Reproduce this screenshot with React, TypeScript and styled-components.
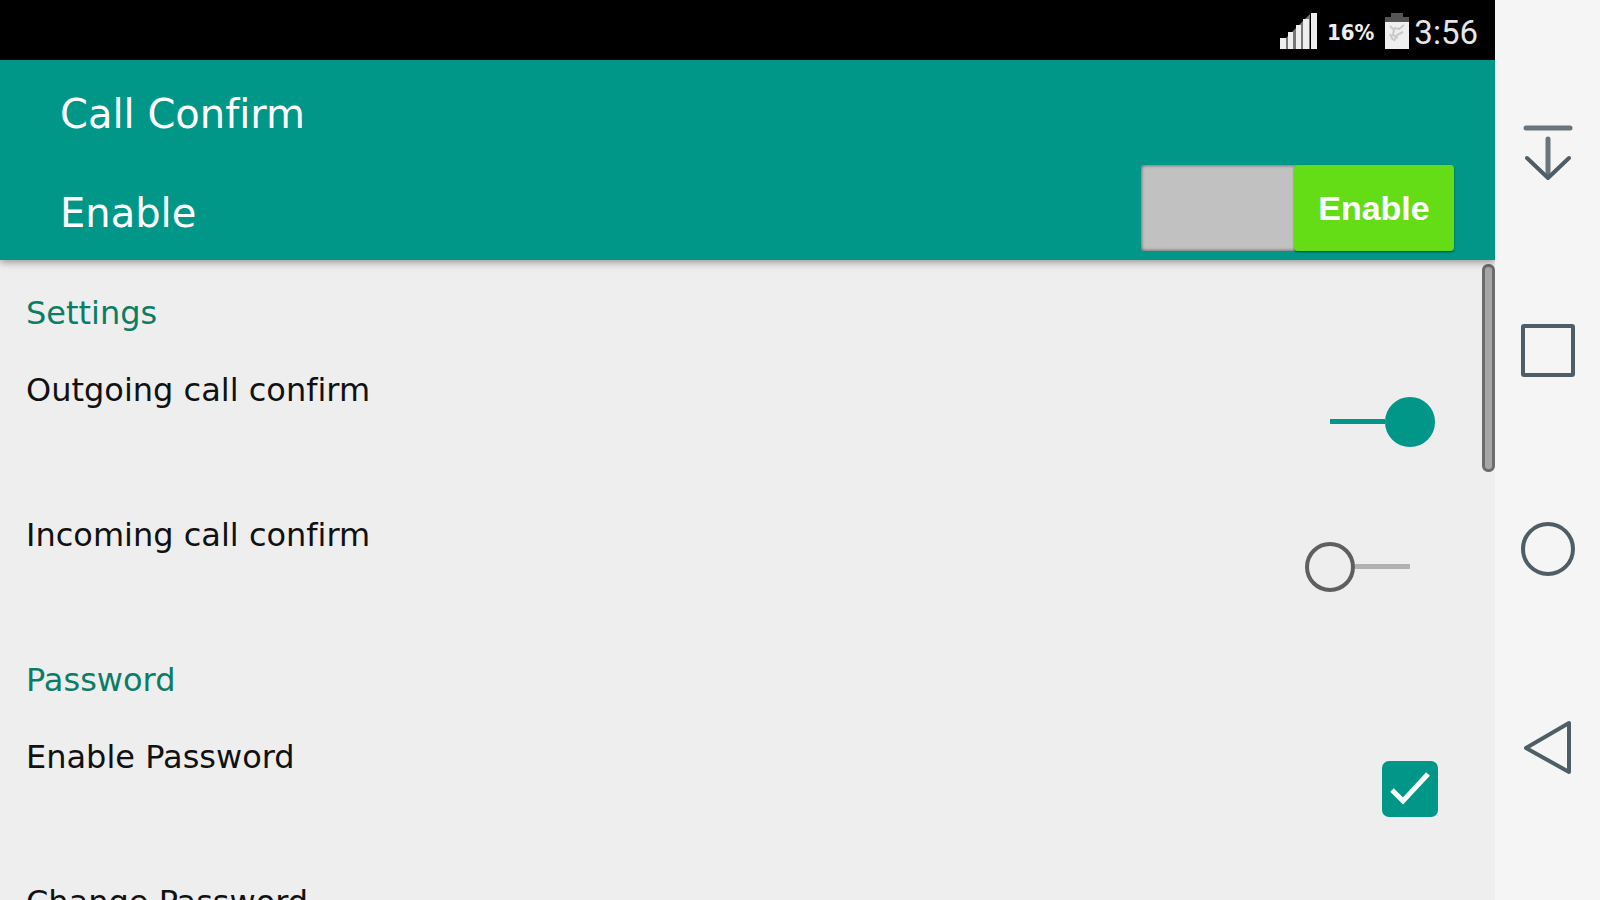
import React, { useState } from 'react';
import styled, { createGlobalStyle } from 'styled-components';

const teal = '#009688';
const ink = '#4f5d66';

const GlobalStyle = createGlobalStyle`
  *, *::before, *::after { box-sizing: border-box; }
  body {
    margin: 0;
    background: #eeeeee;
    font-family: "DejaVu Sans", sans-serif;
    font-variant-ligatures: none;
  }
  button { font: inherit; border: 0; padding: 0; background: none; cursor: pointer; }
  input { margin: 0; }
`;

const Screen = styled.div`
  display: flex;
  height: 100vh;
`;

const AppArea = styled.main`
  flex: 1;
  min-width: 0;
  display: flex;
  flex-direction: column;
`;

const StatusBar = styled.div`
  display: flex;
  flex: none;
  align-items: center;
  justify-content: flex-end;
  height: 60px;
  padding: 2px 17px 0 0;
  background: #000;
  color: #e6e6e6;
`;

const SignalIcon = styled.svg`
  width: 38px;
  height: 36px;
  margin-right: 9px;
`;

const BatteryLevel = styled.span`
  margin-right: 11px;
  padding-top: 4px;
  font-family: "DejaVu Sans Condensed", "DejaVu Sans", sans-serif;
  font-size: 22px;
  font-weight: 700;
  line-height: 32px;
  color: #eee;
`;

const BatteryIcon = styled.svg`
  width: 24px;
  height: 36px;
  margin-right: 5px;
`;

const Clock = styled.span`
  padding-top: 4px;
  font-family: Roboto, sans-serif;
  font-size: 33px;
  line-height: 32px;
`;

const Header = styled.header`
  position: relative;
  z-index: 1;
  flex: none;
  padding: 6px 41px 0 60px;
  background: ${teal};
  color: #fff;
  box-shadow: 0 2px 8px rgba(0, 0, 0, 0.4);
`;

const Title = styled.h1`
  margin: 0;
  font-size: 40px;
  font-weight: 400;
  line-height: 96px;
`;

const EnableRow = styled.div`
  display: flex;
  align-items: flex-start;
  justify-content: space-between;
  height: 98px;
  padding-top: 3px;
`;

const HeaderLabel = styled.span`
  font-size: 40px;
  line-height: 96px;
`;

const Toggle = styled.button<{ $on: boolean }>`
  display: flex;
  flex-direction: ${(p) => (p.$on ? 'row' : 'row-reverse')};
  width: 313px;
  height: 86px;
  border-radius: 4px;
  background: #c1c1c1;
  box-shadow: inset 0 0 3px 1px #777;
`;

const ToggleSpace = styled.span`
  flex: 1;
`;

const ToggleThumb = styled.span<{ $on: boolean }>`
  display: flex;
  align-items: center;
  justify-content: center;
  width: 160px;
  height: 86px;
  border-radius: 4px;
  background: ${(p) => (p.$on ? '#64dd17' : '#8d8d8d')};
  box-shadow: 0 1px 2px rgba(0, 0, 0, 0.5);
  color: #fff;
  font-family: "Liberation Sans", Arial, sans-serif;
  font-size: 34px;
  font-weight: 700;
`;

const Body = styled.div`
  position: relative;
  flex: 1;
  min-height: 0;
  background: #eeeeee;
`;

const SettingsList = styled.div`
  height: 100%;
  padding-top: 12px;
  overflow-y: auto;
  scrollbar-width: none;
`;

const ScrollThumb = styled.div`
  position: absolute;
  top: 4px;
  right: 0;
  width: 13px;
  height: 208px;
  border: 3px solid #6c6c6c;
  border-radius: 6px;
  background: #a6a6a6;
`;

const SectionTitle = styled.h2`
  margin: 0;
  padding: 21px 26px 16px;
  font-size: 32px;
  font-weight: 400;
  line-height: 40px;
  color: #0b7d65;
`;

const Row = styled.div`
  display: flex;
  align-items: center;
  height: 145px;
  padding: 0 57px 0 26px;
`;

const RowLabel = styled.label`
  flex: 1;
  align-self: flex-start;
  padding-top: 21px;
  font-size: 32px;
  line-height: 40px;
  color: #111;
`;

const RowButton = styled.button`
  flex: 1;
  align-self: flex-start;
  padding-top: 21px;
  font-size: 32px;
  line-height: 40px;
  text-align: left;
  color: #111;
`;

const Switch = styled.input`
  appearance: none;
  display: flex;
  align-items: center;
  width: 133px;
  height: 50px;
  padding-right: 28px;
  cursor: pointer;

  &::before {
    content: '';
    width: 50px;
    height: 50px;
    border: 4px solid #5f5f5f;
    border-radius: 50%;
  }

  &::after {
    content: '';
    flex: 1;
    height: 5px;
    background: #b2b2b2;
  }

  &:checked {
    flex-direction: row-reverse;
    padding: 0 3px 0 25px;
  }

  &:checked::before {
    border-color: ${teal};
    background: ${teal};
  }

  &:checked::after {
    background: ${teal};
  }
`;

const CheckSlot = styled.span`
  display: grid;
  width: 56px;
  height: 56px;

  & > * {
    grid-area: 1 / 1;
  }
`;

const CheckInput = styled.input`
  appearance: none;
  width: 56px;
  height: 56px;
  border: 4px solid #5f5f5f;
  border-radius: 7px;
  cursor: pointer;

  &:checked {
    border-color: ${teal};
    background: ${teal};
  }
`;

const CheckMark = styled.svg`
  width: 56px;
  height: 56px;
  pointer-events: none;
`;

const NavBar = styled.nav`
  position: relative;
  z-index: 2;
  display: flex;
  flex: none;
  flex-direction: column;
  width: 105px;
  padding: 52px 0;
  background: #f5f5f5;
`;

const NavButton = styled.button`
  display: flex;
  flex: 1;
  align-items: center;
  justify-content: center;
`;

const NavIcon = styled.svg`
  width: 60px;
  height: 60px;
  fill: none;
  stroke: ${ink};
  stroke-width: 4;
  stroke-linecap: round;
  stroke-linejoin: round;
`;

const navItems = [
  {
    name: 'Notifications',
    shape: (
      <>
        <path d="M8 6H52" strokeWidth="5" stroke="#69757c" />
        <path d="M30 17V54" strokeWidth="5" stroke="#69757c" />
        <path d="M9 36L30 56L51 36" />
      </>
    ),
  },
  { name: 'Recent apps', shape: <rect x="5" y="5" width="50" height="49" rx="1" /> },
  { name: 'Home', shape: <circle cx="30" cy="29" r="25" /> },
  { name: 'Back', shape: <path d="M8 29L51 4V53Z" /> },
];

export default function App() {
  const [enabled, setEnabled] = useState(true);
  const [outgoing, setOutgoing] = useState(true);
  const [incoming, setIncoming] = useState(false);
  const [password, setPassword] = useState(true);

  return (
    <Screen>
      <GlobalStyle />
      <AppArea>
        <StatusBar>
          <SignalIcon viewBox="0 0 38 36" aria-hidden="true">
            <path d="M0 26L6 25L30 1V36H0Z" fill="#777" />
            <path d="M0 25H6V36H0ZM8 19H13V36H8ZM16 12H21V36H16ZM23 6H29V36H23ZM31 0H37V36H31Z" fill="#eee" />
          </SignalIcon>
          <BatteryLevel>16%</BatteryLevel>
          <BatteryIcon viewBox="0 0 24 36" aria-hidden="true">
            <path d="M0 9V4H6V0H18V4H24V9Z" fill="#555" />
            <path d="M0 9H24V36H0Z" fill="#efefef" />
            <path d="M5 13L9 17L8 22L13 25M19 12L14 16L9 15M18 19L12 22L9 28M5 21L8 27" fill="none" stroke="#c8c8c8" strokeWidth="2" />
          </BatteryIcon>
          <Clock>3:56</Clock>
        </StatusBar>
        <Header>
          <Title>Call Confirm</Title>
          <EnableRow>
            <HeaderLabel id="enable-label">Enable</HeaderLabel>
            <Toggle
              type="button"
              role="switch"
              aria-checked={enabled}
              aria-labelledby="enable-label"
              $on={enabled}
              onClick={() => setEnabled(!enabled)}
            >
              <ToggleSpace />
              <ToggleThumb $on={enabled}>{enabled ? 'Enable' : 'Disable'}</ToggleThumb>
            </Toggle>
          </EnableRow>
        </Header>
        <Body>
          <SettingsList>
            <SectionTitle>Settings</SectionTitle>
            <Row>
              <RowLabel htmlFor="outgoing">Outgoing call confirm</RowLabel>
              <Switch id="outgoing" type="checkbox" checked={outgoing} onChange={(e) => setOutgoing(e.target.checked)} />
            </Row>
            <Row>
              <RowLabel htmlFor="incoming">Incoming call confirm</RowLabel>
              <Switch id="incoming" type="checkbox" checked={incoming} onChange={(e) => setIncoming(e.target.checked)} />
            </Row>
            <SectionTitle>Password</SectionTitle>
            <Row>
              <RowLabel htmlFor="password">Enable Password</RowLabel>
              <CheckSlot>
                <CheckInput id="password" type="checkbox" checked={password} onChange={(e) => setPassword(e.target.checked)} />
                {password && (
                  <CheckMark viewBox="0 0 56 56" aria-hidden="true">
                    <path d="M10 29L21 40L46 13" fill="none" stroke="#fff" strokeWidth="5" />
                  </CheckMark>
                )}
              </CheckSlot>
            </Row>
            <Row>
              <RowButton type="button">Change Password</RowButton>
            </Row>
          </SettingsList>
          <ScrollThumb />
        </Body>
      </AppArea>
      <NavBar aria-label="System navigation">
        {navItems.map((item) => (
          <NavButton key={item.name} type="button" aria-label={item.name}>
            <NavIcon viewBox="0 0 60 60" aria-hidden="true">{item.shape}</NavIcon>
          </NavButton>
        ))}
      </NavBar>
    </Screen>
  );
}
